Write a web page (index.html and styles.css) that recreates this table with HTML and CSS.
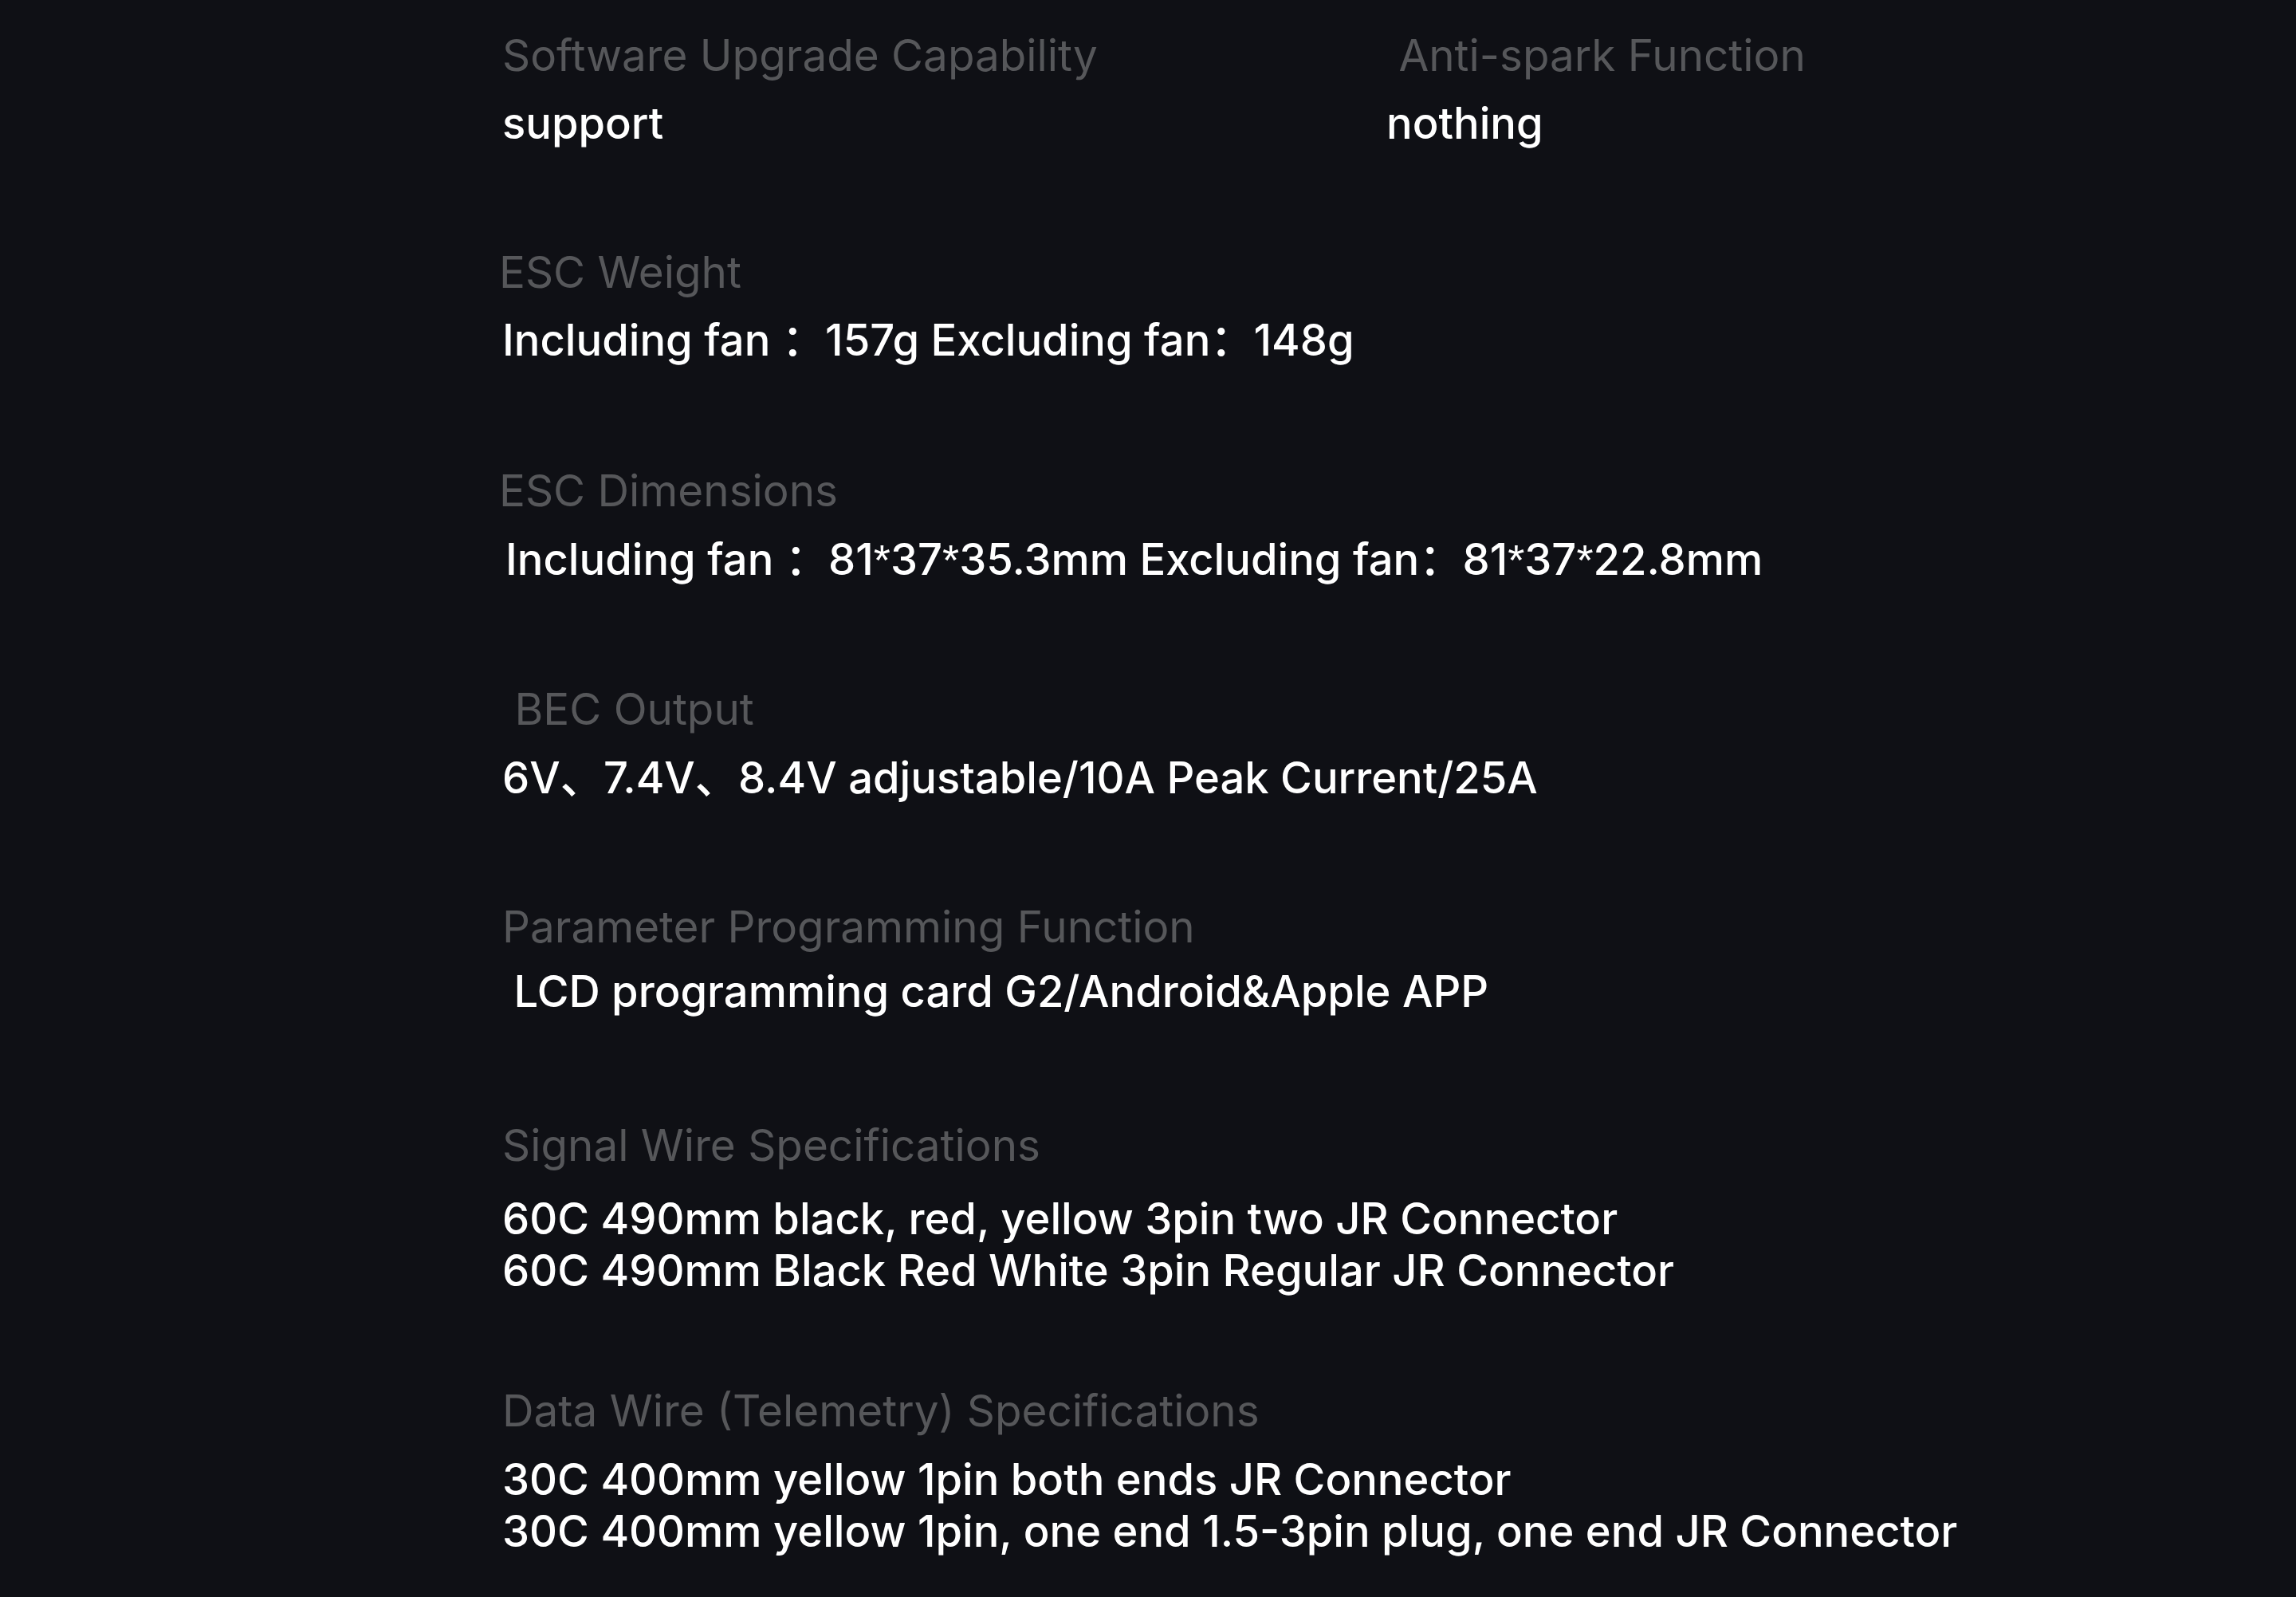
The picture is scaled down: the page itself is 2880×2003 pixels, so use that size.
FILE: index.html
```html
<!DOCTYPE html>
<html lang="en">
<head>
<meta charset="utf-8">
<title>ESC Specifications</title>
<link rel="stylesheet" href="styles.css">
</head>
<body>
<main class="specs">
  <section class="spec spec-first">
    <div class="pair">
      <div class="cell">
        <div class="label">Software Upgrade Capability</div>
        <div class="value">support</div>
      </div>
      <div class="cell">
        <div class="label">&nbsp;Anti-spark Function</div>
        <div class="value">nothing</div>
      </div>
    </div>
  </section>

  <section class="spec">
    <div class="label shift-left">ESC Weight</div>
    <div class="value">Including fan ：157g Excluding fan：148g</div>
  </section>

  <section class="spec spec-wide">
    <div class="label shift-left">ESC Dimensions</div>
    <div class="value shift-right gap-21">Including fan ：81<span class="ast">*</span>37<span class="ast">*</span>35.3mm Excluding fan：81<span class="ast">*</span>37<span class="ast">*</span>22.8mm</div>
  </section>

  <section class="spec">
    <div class="label">&nbsp;BEC Output</div>
    <div class="value gap-21">6V、7.4V、8.4V adjustable/10A Peak Current/25A</div>
  </section>

  <section class="spec">
    <div class="label">Parameter Programming Function</div>
    <div class="value gap-16">&nbsp;LCD programming card G2/Android&amp;Apple APP</div>
  </section>

  <section class="spec spec-wider">
    <div class="label">Signal Wire Specifications</div>
    <div class="value gap-27">60C 490mm black, red, yellow 3pin two JR Connector<br>60C 490mm Black Red White 3pin Regular JR Connector</div>
  </section>

  <section class="spec spec-tight">
    <div class="label">Data Wire (Telemetry) Specifications</div>
    <div class="value gap-21">30C 400mm yellow 1pin both ends JR Connector<br>30C 400mm yellow 1pin, one end 1.5-3pin plug, one end JR Connector</div>
  </section>
</main>
</body>
</html>
```

FILE: styles.css
```css
html, body {
  margin: 0;
  padding: 0;
}

body {
  background: #0f1015;
  min-height: 2003px;
  font-family: Inter, "Noto Sans", "Liberation Sans", "Noto Sans CJK SC", sans-serif;
  -webkit-font-smoothing: antialiased;
}

.specs {
  padding: 37px 0 0 630px;
  display: flex;
  flex-direction: column;
}

.spec {
  margin-top: 122px;
}

.spec-first {
  margin-top: 0;
}

.spec-wide {
  margin-top: 124px;
}

.spec-wider {
  margin-top: 128px;
}

.spec-tight {
  margin-top: 111px;
}

.pair {
  display: grid;
  grid-template-columns: 1109px auto;
}

.label {
  font-size: 54.8px;
  line-height: 65px;
  font-weight: 400;
  color: #56575a;
  white-space: pre;
}

.value {
  font-size: 54.3px;
  line-height: 65px;
  font-weight: 500;
  color: #ffffff;
  margin-top: 20px;
  white-space: nowrap;
}

.ast {
  font-family: "Liberation Sans", sans-serif;
  font-weight: 400;
}

.gap-16 {
  margin-top: 16px;
}

.gap-21 {
  margin-top: 21px;
}

.gap-27 {
  margin-top: 27px;
}

.shift-left {
  margin-left: -4px;
}

.shift-right {
  margin-left: 4px;
}
```
